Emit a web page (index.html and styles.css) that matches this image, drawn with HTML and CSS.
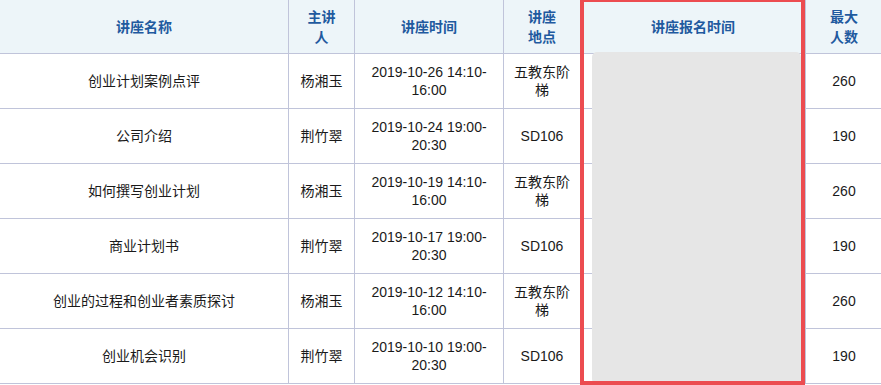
FILE: index.html
```html
<!DOCTYPE html>
<html lang="zh-CN">
<head>
<meta charset="utf-8">
<title>讲座列表</title>
<link rel="stylesheet" href="styles.css">
</head>
<body>
<div class="page">
  <table class="lectures">
    <colgroup>
      <col class="c-name">
      <col class="c-speaker">
      <col class="c-time">
      <col class="c-place">
      <col class="c-signup">
      <col class="c-max">
    </colgroup>
    <thead>
      <tr>
        <th>讲座名称</th>
        <th>主讲<br>人</th>
        <th>讲座时间</th>
        <th>讲座<br>地点</th>
        <th>讲座报名时间</th>
        <th>最大<br>人数</th>
      </tr>
    </thead>
    <tbody>
      <tr>
        <td>创业计划案例点评</td>
        <td>杨湘玉</td>
        <td>2019-10-26 14:10-<br>16:00</td>
        <td>五教东阶<br>梯</td>
        <td></td>
        <td>260</td>
      </tr>
      <tr>
        <td>公司介绍</td>
        <td>荆竹翠</td>
        <td>2019-10-24 19:00-<br>20:30</td>
        <td>SD106</td>
        <td></td>
        <td>190</td>
      </tr>
      <tr>
        <td>如何撰写创业计划</td>
        <td>杨湘玉</td>
        <td>2019-10-19 14:10-<br>16:00</td>
        <td>五教东阶<br>梯</td>
        <td></td>
        <td>260</td>
      </tr>
      <tr>
        <td>商业计划书</td>
        <td>荆竹翠</td>
        <td>2019-10-17 19:00-<br>20:30</td>
        <td>SD106</td>
        <td></td>
        <td>190</td>
      </tr>
      <tr>
        <td>创业的过程和创业者素质探讨</td>
        <td>杨湘玉</td>
        <td>2019-10-12 14:10-<br>16:00</td>
        <td>五教东阶<br>梯</td>
        <td></td>
        <td>260</td>
      </tr>
      <tr>
        <td>创业机会识别</td>
        <td>荆竹翠</td>
        <td>2019-10-10 19:00-<br>20:30</td>
        <td>SD106</td>
        <td></td>
        <td>190</td>
      </tr>
    </tbody>
  </table>
  <div class="redact"></div>
  <div class="highlight"></div>
</div>
</body>
</html>
```

FILE: styles.css
```css
html, body {
  margin: 0;
  padding: 0;
  background: #ffffff;
  overflow: hidden;
}

.page {
  position: relative;
  width: 881px;
  height: 385px;
  overflow: hidden;
  font-family: "Liberation Sans", "Noto Sans CJK SC", sans-serif;
  font-size: 14px;
  color: #1a1a1a;
}

.lectures {
  border-collapse: collapse;
  table-layout: fixed;
  width: 883px;
  margin: -1px 0 0 -1px;
}

.c-name { width: 289px; }
.c-speaker { width: 66px; }
.c-time { width: 149px; }
.c-place { width: 77px; }
.c-signup { width: 225px; }
.c-max { width: 77px; }

.lectures th,
.lectures td {
  border: 1px solid #c0c4da;
  text-align: center;
  vertical-align: middle;
  padding: 0 8px;
}

.lectures th {
  background: #edf5f9;
  color: #1f5a9f;
  font-weight: bold;
  line-height: 20px;
  height: 54px;
  box-sizing: border-box;
}

.lectures td {
  line-height: 18px;
  height: 55px;
  box-sizing: border-box;
}

.redact {
  position: absolute;
  left: 592px;
  top: 52px;
  width: 209px;
  height: 332px;
  background: #e6e6e6;
  border-radius: 5px;
}

.highlight {
  position: absolute;
  left: 580px;
  top: -2px;
  width: 225px;
  height: 387px;
  box-sizing: border-box;
  border: 4px solid #ec4c50;
}
```
